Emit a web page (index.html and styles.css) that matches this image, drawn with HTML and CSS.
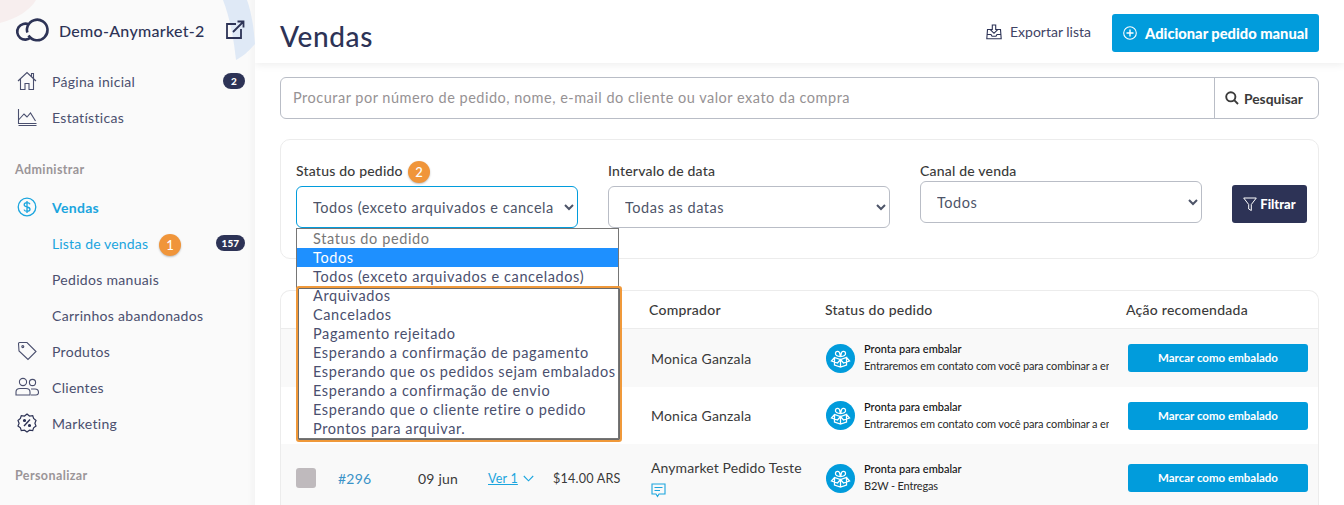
FILE: index.html
```html
<!DOCTYPE html>
<html lang="pt">
<head>
<meta charset="utf-8">
<title>Vendas</title>
<link rel="stylesheet" href="styles.css">
</head>
<body>
<div class="app">
  <aside class="sidebar">
    <svg class="decor" width="255" height="64" viewBox="0 0 255 64"><path d="M0 0H36C30 10 18 18 0 23Z" fill="#f7eeee"/><path d="M223 0H247C252 14 254 30 255 44C248 52 242 57 236 60C234 40 230 18 223 0Z" fill="#dfe9f6"/></svg>
    <div class="brand">
      <svg class="brand-logo" width="34" height="24" viewBox="0 0 34 24" fill="none" stroke="#2d3356" stroke-width="2.6"><path d="M14 6.6A8 8 0 1 0 16 19.2"/><path d="M13.5 17.5A10.3 10.3 0 1 0 12.6 8.2C11.8 10.5 11.5 12.5 12.5 14.5"/></svg>
      <span class="brand-name">Demo-Anymarket-2</span>
      <svg class="brand-link" width="20" height="20" viewBox="0 0 20 20" fill="none" stroke="#2d3356" stroke-width="1.8"><path d="M11 4H2V18H16V9"/><path d="M8 12L18 2M12.5 1.5H18.5V7.5" /></svg>
    </div>
    <nav class="nav">
      <a class="nav-item"><svg class="nav-icon" width="20" height="20" viewBox="0 0 20 20" fill="none" stroke="#4a4f6e" stroke-width="1.1"><path d="M1 10L10 1.5 19 10M3.5 8V18.5H8V12.5H12V18.5H16.5V8M14.5 5.5V2.5H16.5V7.5"/></svg><span>Página inicial</span><b class="badge">2</b></a>
      <a class="nav-item"><svg class="nav-icon" width="20" height="20" viewBox="0 0 20 20" fill="none" stroke="#4a4f6e" stroke-width="1.1"><path d="M1.5 2V16.5H19.5M1.5 18.5H19.5M1.5 13L7 7 10 10 13.5 6 18.5 14"/></svg><span>Estatísticas</span></a>
      <div class="nav-title">Administrar</div>
      <a class="nav-item active"><svg class="nav-icon" width="20" height="20" viewBox="0 0 20 20" fill="none" stroke="#1ba5de" stroke-width="1.3"><circle cx="10" cy="10" r="8.8"/><path d="M13 7.3C12.5 6 11.3 5.7 10 5.7 8.4 5.7 7.2 6.5 7.2 7.8 7.2 10.8 13 9.2 13 12.2 13 13.6 11.6 14.3 10 14.3 8.6 14.3 7.4 13.8 7 12.6M10 4V16"/></svg><strong>Vendas</strong></a>
      <a class="nav-item sub active"><span>Lista de vendas</span><b class="badge">157</b></a>
      <a class="nav-item sub"><span>Pedidos manuais</span></a>
      <a class="nav-item sub"><span>Carrinhos abandonados</span></a>
      <a class="nav-item"><svg class="nav-icon" width="20" height="20" viewBox="0 0 20 20" fill="none" stroke="#4a4f6e" stroke-width="1.1"><path d="M1.5 2.5C1.5 2 2 1.5 2.5 1.5H10L19 10.5 11 18.5 2 10Z"/><circle cx="5.8" cy="5.6" r="1"/></svg><span>Produtos</span></a>
      <a class="nav-item"><svg class="nav-icon wide" width="24" height="20" viewBox="0 0 24 20" fill="none" stroke="#4a4f6e" stroke-width="1.1"><circle cx="8" cy="5" r="3.6"/><circle cx="17.5" cy="5.5" r="3.1"/><path d="M1 18V15C1 12.5 3 11.5 5 11.5H11C13 11.5 15 12.5 15 15V18ZM16 12H20C22 12 23.5 13.5 23.5 15.5 23.5 17 22.5 18 21 18H16"/></svg><span>Clientes</span></a>
      <a class="nav-item"><svg class="nav-icon" width="20" height="20" viewBox="0 0 20 20" fill="none" stroke="#2d3356" stroke-width="1.2"><path d="M10 1L12.5 3 15.7 2.6 16.6 5.5 19 7.5 17.9 10.3 19 13 16.6 14.8 15.7 17.7 12.5 17.2 10 19 7.5 17.2 4.3 17.7 3.4 14.8 1 13 2.1 10.3 1 7.5 3.4 5.5 4.3 2.6 7.5 3Z"/><path d="M7 13L13 6.5" stroke-width="1.4"/><circle cx="7.5" cy="7.5" r="1" fill="#2d3356"/><circle cx="12.5" cy="12.5" r="1" fill="#2d3356"/></svg><span>Marketing</span></a>
      <div class="nav-title">Personalizar</div>
    </nav>
  </aside>

  <main class="main">
    <header class="topbar">
      <h1 class="page-title">Vendas</h1>
      <a class="export"><svg width="16" height="16" viewBox="0 0 16 16" fill="none" stroke="#2d3356" stroke-width="1.1"><path d="M4 5.5H1.5L.8 14.8H15.2L14.5 5.5H12M1 10.5H5L6 12.3H10L11 10.5H15M6.3 1H9.7V5.5H11.8L8 9.3 4.2 5.5H6.3Z"/></svg>Exportar lista</a>
      <a class="btn-primary"><svg width="14" height="14" viewBox="0 0 14 14" fill="none" stroke="#fff" stroke-width="1.1"><circle cx="7" cy="7" r="6.3"/><path d="M7 3.5V10.5M3.5 7H10.5" stroke-width="1.4"/></svg>Adicionar pedido manual</a>
    </header>

    <div class="content">
      <div class="search">
        <div class="search-input">Procurar por número de pedido, nome, e-mail do cliente ou valor exato da compra</div>
        <div class="search-btn"><svg width="14" height="14" viewBox="0 0 14 14" fill="none" stroke="#3a3a3a" stroke-width="1.9"><circle cx="5.8" cy="5.8" r="4.6"/><path d="M9.2 9.2L13 13"/></svg>Pesquisar</div>
      </div>

      <section class="filters">
        <div class="field">
          <label class="field-label">Status do pedido</label>
          <select class="select focus"><option>Todos (exceto arquivados e cancelados)</option></select>
          <div class="dropdown">
            <div class="option muted">Status do pedido</div>
            <div class="option selected">Todos</div>
            <div class="option">Todos (exceto arquivados e cancelados)</div>
            <div class="option">Arquivados</div>
            <div class="option">Cancelados</div>
            <div class="option">Pagamento rejeitado</div>
            <div class="option">Esperando a confirmação de pagamento</div>
            <div class="option">Esperando que os pedidos sejam embalados</div>
            <div class="option">Esperando a confirmação de envio</div>
            <div class="option">Esperando que o cliente retire o pedido</div>
            <div class="option">Prontos para arquivar.</div>
            <div class="marker-box"></div>
          </div>
          <span class="step step-two">2</span>
        </div>
        <div class="field">
          <label class="field-label">Intervalo de data</label>
          <select class="select"><option>Todas as datas</option></select>
        </div>
        <div class="field raised">
          <label class="field-label">Canal de venda</label>
          <select class="select"><option>Todos</option></select>
        </div>
        <a class="btn-filter"><svg width="14" height="15" viewBox="0 0 14 15" fill="none" stroke="#fff" stroke-width="1"><path d="M.7 1H13.3L8.3 7.5V13.5L5.7 12V7.5Z"/></svg>Filtrar</a>
      </section>

      <section class="table">
        <div class="thead">
          <span class="c-check"></span><span>Pedido</span><span>Data</span><span>Itens</span><span>Total</span>
          <span>Comprador</span><span>Status do pedido</span><span>Ação recomendada</span>
        </div>
        <div class="row shade">
          <span class="check"></span><a class="order">#298</a><span>09 jun</span><a class="items"><u>Ver 1</u></a><span class="total">$14.00 ARS</span>
          <span class="buyer">Monica Ganzala</span>
          <div class="status"><svg class="box-icon" width="29" height="29" viewBox="0 0 29 29"><use href="#box"/></svg><div class="status-text"><b>Pronta para embalar</b><span>Entraremos em contato com você para combinar a entrega</span></div></div>
          <a class="btn-action">Marcar como embalado</a>
        </div>
        <div class="row">
          <span class="check"></span><a class="order">#297</a><span>09 jun</span><a class="items"><u>Ver 1</u></a><span class="total">$14.00 ARS</span>
          <span class="buyer">Monica Ganzala</span>
          <div class="status"><svg class="box-icon" width="29" height="29" viewBox="0 0 29 29"><use href="#box"/></svg><div class="status-text"><b>Pronta para embalar</b><span>Entraremos em contato com você para combinar a entrega</span></div></div>
          <a class="btn-action">Marcar como embalado</a>
        </div>
        <div class="row shade tall">
          <span class="check"></span><a class="order">#296</a><span>09 jun</span>
          <a class="items"><u>Ver 1</u><svg width="11" height="7" viewBox="0 0 11 7" fill="none" stroke="#1ba5de" stroke-width="1.1"><path d="M.8 1L5.5 5.8 10.2 1"/></svg></a>
          <span class="total">$14.00 ARS</span>
          <div class="buyer-stack"><span>Anymarket Pedido Teste</span><svg width="15" height="15" viewBox="0 0 15 15" fill="none" stroke="#1ba5de" stroke-width="1.1"><path d="M1 1H14V11H8L6.5 13.5 5 11H1ZM3.5 4.5H11.5M3.5 7.5H9"/></svg></div>
          <div class="status"><svg class="box-icon" width="29" height="29" viewBox="0 0 29 29"><use href="#box"/></svg><div class="status-text"><b>Pronta para embalar</b><span>B2W - Entregas</span></div></div>
          <a class="btn-action">Marcar como embalado</a>
        </div>
      </section>
    </div>
  </main>

  <span class="step step-one">1</span>
</div>
<svg class="sprites" width="0" height="0"><defs><g id="box"><circle cx="14.5" cy="14.5" r="14.5" fill="#019cdc"/><g fill="none" stroke="#fff" stroke-width="1.3"><path d="M8.5 13.5V21L14.5 23 20.5 21V13.5L14.5 15.5 8.5 13.5 5.5 17 11.5 19 14.5 15.5 17.5 19 23.5 17 20.5 13.5M14.5 15.5V23"/><path d="M14.5 12.5C11 12.5 9 11 9.5 9 10 7 12.5 7 13.5 8.5L14.5 12.5 15.5 8.5C16.5 7 19 7 19.5 9 20 11 18 12.5 14.5 12.5Z"/></g></g></defs></svg>
</body>
</html>
```

FILE: styles.css
```css
* { box-sizing: border-box; }
html, body { margin: 0; padding: 0; height: 100%; }
body { font-family: "Lato", "Noto Sans", sans-serif; color: #3a3a3a; background: #fff; overflow: hidden; }
a { text-decoration: none; color: inherit; }
.sprites { position: absolute; }

.app { position: relative; display: flex; width: 1344px; height: 505px; overflow: hidden; }

/* Sidebar */
.sidebar { position: relative; flex: 0 0 255px; background: #fafafa; box-shadow: inset -10px 0 8px -8px rgba(0,0,0,.035); }
.decor { position: absolute; top: 0; left: 0; }
.brand { position: relative; display: flex; align-items: center; height: 63px; padding: 0 10px 3px 15px; }
.brand-logo { flex: none; margin-right: 10px; }
.brand-name { font-size: 16px; font-weight: 500; letter-spacing: .28px; color: #2d3356; }
.brand-link { margin-left: auto; }
.nav { position: relative; display: flex; flex-direction: column; padding-right: 10px; }
.nav-item { display: flex; align-items: center; height: 36px; padding-left: 17px; font-size: 14px; letter-spacing: .3px; color: #4a4f6e; }
.nav-item strong { font-weight: 700; }
.nav-item.active { color: #1ba5de; }
.nav-item.sub { padding-left: 52px; }
.nav-item.sub.active { letter-spacing: .16px; }
.nav-icon { flex: none; margin-right: 15px; }
.nav-icon.wide { margin: 0 13px 0 -2px; }
.badge { margin-left: auto; min-width: 22px; height: 16px; padding: 0 6px; border-radius: 8px; background: #2d3356; color: #fff; font-size: 10px; font-weight: 900; line-height: 16px; text-align: center; letter-spacing: 0; }
.nav-title { height: 24px; margin: 23px 0 7px; padding-left: 15px; font-size: 12.5px; font-weight: 700; line-height: 24px; letter-spacing: .4px; color: #9a9598; }

/* Main */
.main { flex: 1; min-width: 0; display: flex; flex-direction: column; }
.topbar { flex: none; display: flex; align-items: center; height: 63px; padding: 0 25px; background: #fff; box-shadow: 0 2px 8px rgba(0,0,0,.07); }
.page-title { margin: 8px auto 0 0; font-size: 28px; font-weight: 500; letter-spacing: .6px; color: #2d3356; }
.export { display: flex; align-items: center; gap: 8px; font-size: 14px; letter-spacing: 0; color: #3f4465; }
.btn-primary { display: flex; align-items: center; gap: 8px; height: 38px; margin: 3px 0 0 21px; padding: 0 11px; border-radius: 3px; background: #019cdc; color: #fff; font-size: 14.7px; font-weight: 900; white-space: nowrap; }

.content { flex: none; padding: 14px 25px 0; }

.search { display: flex; height: 42px; border: 1px solid #b9bdc6; border-radius: 6px; background: #fff; }
.search-input { flex: 1; padding-left: 12px; font-size: 14.5px; line-height: 40px; letter-spacing: .5px; color: #969294; }
.search-btn { display: flex; align-items: center; gap: 5px; width: 104px; padding-left: 10px; border-left: 1px solid #b9bdc6; font-size: 13.8px; font-weight: 700; color: #3a3a3a; }

.filters { display: flex; align-items: flex-start; gap: 30px; height: 120px; margin-top: 20px; padding: 23px 0 0 15px; border: 1px solid #ececec; border-radius: 10px; }
.field { position: relative; display: flex; flex-direction: column; width: 282px; }
.field-label { height: 15px; margin-bottom: 8px; font-size: 14px; font-weight: 500; line-height: 15px; letter-spacing: .2px; color: #3a3a3a; }
.field.raised .field-label { margin-bottom: 3px; }
.select { width: 282px; height: 42px; padding: 0 7px 0 12px; border: 1px solid #b9bdc6; border-radius: 6px; background-color: #fff; font-family: inherit; font-size: 14.5px; letter-spacing: .55px; color: #4d5468; }
.select.focus { border-color: #019cdc; }
.btn-filter { display: flex; align-items: center; justify-content: center; gap: 3px; width: 75px; height: 38px; margin-top: 22px; border-radius: 3px; background: #2d3356; color: #fff; font-size: 13px; font-weight: 900; }

.dropdown { position: absolute; top: 65px; left: 0; z-index: 5; width: 323px; border: 1px solid #767676; background: #fff; font-size: 14.5px; letter-spacing: .6px; color: #4a4f6e; }
.option { height: 19px; padding-left: 16px; line-height: 19px; white-space: nowrap; }
.option.muted { color: #777; }
.option.selected { background: #1e90ff; color: #fff; }
.marker-box { position: absolute; top: 57px; left: -1px; right: -4px; bottom: -4px; border: 2px solid #f0993a; border-radius: 3px; box-shadow: inset 0 0 0 1px #6b6b6b; pointer-events: none; }

.step { position: absolute; z-index: 6; display: flex; align-items: center; justify-content: center; width: 22px; height: 22px; border-radius: 50%; background: #f0953a; color: #fff; font-size: 13px; font-weight: 500; box-shadow: 0 1px 2px rgba(0,0,0,.25); }
.step-one { left: 159px; top: 234px; }
.step-two { left: 112px; top: -2px; }

/* Table */
.table { margin-top: 31px; border: 1px solid #ececec; border-bottom: 0; border-radius: 10px 10px 0 0; font-size: 14px; }
.thead, .row { display: grid; grid-template-columns: 42px 80px 70px 65px 96px 176px 301px 1fr; align-items: center; padding-left: 15px; }
.thead { height: 38px; border-bottom: 1px solid #ececec; font-weight: 500; letter-spacing: .25px; color: #3a3a3a; }
.row { height: 58px; letter-spacing: .2px; }
.row + .row { height: 57px; }
.row.tall { height: 68px; }
.row.shade { background: #f9f9f9; }
.check { width: 20px; height: 20px; border-radius: 3px; background: #bfbabd; }
.order { color: #3a93c8; font-size: 14px; }
.items { display: flex; align-items: center; gap: 5px; color: #1ba5de; font-size: 12.5px; }
.total { font-size: 12.6px; white-space: nowrap; }
.buyer { padding-left: 2px; }
.buyer-stack { display: flex; flex-direction: column; align-items: flex-start; gap: 7px; padding: 0 0 0 2px; white-space: nowrap; }
.buyer-stack span { letter-spacing: .1px; }
.status { display: flex; align-items: center; gap: 9px; padding-left: 1px; min-width: 0; }
.box-icon { flex: none; }
.status-text { display: flex; flex-direction: column; gap: 4px; width: 245px; margin-top: -2px; font-size: 11px; letter-spacing: -.16px; color: #2a2a2a; overflow: hidden; white-space: nowrap; }
.status-text b { font-weight: 500; letter-spacing: 0; color: #111; }
.btn-action { display: block; width: 180px; height: 28px; margin-left: 2px; border-radius: 3px; background: #019cdc; color: #fff; font-size: 11.5px; font-weight: 700; line-height: 28px; text-align: center; letter-spacing: 0; }
```
